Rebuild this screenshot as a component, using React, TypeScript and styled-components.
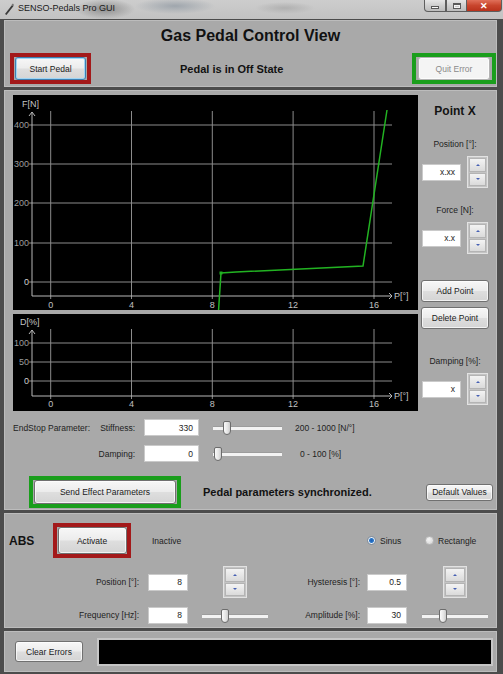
import React from "react";
import styled, { createGlobalStyle } from "styled-components";

const UI_FONT = `"Liberation Sans", Arial, sans-serif`;

const GlobalStyle = createGlobalStyle`
  html, body {
    margin: 0;
    padding: 0;
    background: #4b4b4b;
  }
  body {
    font-family: ${UI_FONT};
    width: 503px;
    height: 674px;
    overflow: hidden;
  }
  * {
    box-sizing: border-box;
  }
`;

const Window = styled.div`
  width: 503px;
  height: 674px;
  display: flex;
  flex-direction: column;
  background: #4c4c4c;
`;

const TitleBar = styled.div`
  height: 19px;
  flex: none;
  display: flex;
  align-items: flex-start;
  background:
    radial-gradient(ellipse 30px 10px at 105px 9px, #8e8e8e, rgba(142, 142, 142, 0)),
    radial-gradient(ellipse 40px 8px at 175px 6px, #9fa6ad, rgba(159, 166, 173, 0)),
    radial-gradient(ellipse 30px 6px at 285px 8px, #b0b0b0, rgba(176, 176, 176, 0)),
    linear-gradient(180deg, #cdcdcd 0%, #c2c2c2 100%);
`;

const AppIcon = styled.svg`
  margin: 3px 0 0 4px;
  flex: none;
`;

const TitleText = styled.div`
  margin-left: 4px;
  font-size: 9px;
  line-height: 16px;
  color: #1a1a1a;
`;

const WindowControls = styled.div`
  margin-left: auto;
  margin-right: 1px;
  display: flex;
`;

const CtrlButton = styled.div<{ $w: number; $close?: boolean }>`
  width: ${p => p.$w}px;
  height: 12px;
  border: 1px solid #5e5e5e;
  border-top: none;
  border-left-width: ${p => (p.$close ? 0 : 1)}px;
  background: ${p =>
    p.$close
      ? "linear-gradient(180deg, #e0705a 0%, #c8452d 50%, #b9321c 100%)"
      : "linear-gradient(180deg, #e6e6e6 0%, #cfcfcf 50%, #bdbdbd 100%)"};
  border-radius: ${p => (p.$close ? "0 0 4px 0" : "0")};
  display: flex;
  align-items: center;
  justify-content: center;
  color: #fff;
  font-size: 9px;
  font-weight: bold;
  &:first-child {
    border-radius: 0 0 0 4px;
  }
`;

const MinGlyph = styled.span`
  width: 8px;
  height: 3px;
  margin-top: 3px;
  background: #fafafa;
  border: 1px solid #5a5a5a;
`;

const MaxGlyph = styled.span`
  width: 8px;
  height: 6px;
  border: 1px solid #5a5a5a;
  border-top-width: 2px;
  background: transparent;
  box-shadow: inset 0 0 0 1px #f4f4f4;
`;

const Body = styled.div`
  flex: 1;
  display: flex;
  flex-direction: column;
  gap: 3px;
  padding: 1px 6px 2px 4px;
`;

const Panel = styled.div<{ $h: number }>`
  height: ${p => p.$h}px;
  flex: none;
  background: #a9a9a9;
  border: 1px solid #bcbcbc;
  display: flex;
  flex-direction: column;
`;

const ViewTitle = styled.div`
  margin-top: 5px;
  font-size: 16px;
  font-weight: bold;
  line-height: 20px;
  text-align: center;
  color: #111;
`;

const HeaderRow = styled.div`
  margin-top: 7px;
  padding-left: 5px;
  display: flex;
  align-items: center;
`;

const StatusText = styled.div<{ $ml: number }>`
  margin-left: ${p => p.$ml}px;
  font-size: 11px;
  font-weight: bold;
  color: #121212;
`;

const Highlight = styled.div<{ $color: string; $w: number; $h: number; $push?: boolean }>`
  width: ${p => p.$w}px;
  height: ${p => p.$h}px;
  margin-left: ${p => (p.$push ? "auto" : "0")};
  border: 4px solid ${p => p.$color};
  display: flex;
  align-items: center;
  justify-content: center;
  flex: none;
`;

const Button = styled.div<{ $w: number; $h: number; $focus?: boolean; $disabled?: boolean }>`
  width: ${p => p.$w}px;
  height: ${p => p.$h}px;
  flex: none;
  display: flex;
  align-items: center;
  justify-content: center;
  font-size: 8.5px;
  color: ${p => (p.$disabled ? "#8a8a8a" : "#1b1b1b")};
  border: 1px solid ${p => (p.$disabled ? "#b3b3b3" : p.$focus ? "#3c7fb1" : "#707070")};
  border-radius: 3px;
  background: ${p =>
    p.$disabled
      ? "#f4f4f4"
      : "linear-gradient(180deg, #f7f7f7 0%, #ececec 48%, #dedede 52%, #d4d4d4 100%)"};
  box-shadow: ${p =>
    p.$focus ? "inset 0 0 0 1px #9fd5f5" : "inset 0 0 0 1px rgba(255, 255, 255, 0.7)"};
`;

const MainPanel = styled(Panel)`
  padding: 4px 0 0 8px;
`;

const TopArea = styled.div`
  display: flex;
  gap: 2px;
`;

const ChartsCol = styled.div`
  display: flex;
  flex-direction: column;
  gap: 4px;
  width: 405px;
`;

const ChartBox = styled.div<{ $h: number }>`
  width: 405px;
  height: ${p => p.$h}px;
  background: #000;
  overflow: hidden;
`;

const RightCol = styled.div`
  width: 70px;
  display: flex;
  flex-direction: column;
  align-items: center;
`;

const PointTitle = styled.div`
  margin-top: 9px;
  font-size: 12px;
  font-weight: bold;
  line-height: 14px;
  color: #141414;
`;

const FieldLabel = styled.div<{ $mt: number }>`
  margin-top: ${p => p.$mt}px;
  font-size: 8.5px;
  line-height: 12px;
  color: #1e1e1e;
`;

const SpinRow = styled.div`
  margin-top: 6px;
  display: flex;
  align-items: center;
  gap: 6px;
`;

const Field = styled.div<{ $w: number }>`
  width: ${p => p.$w}px;
  height: 17px;
  flex: none;
  background: #fff;
  border: 1px solid #cacaca;
  font-size: 8.5px;
  color: #1d1d1d;
  display: flex;
  align-items: center;
  justify-content: flex-end;
  padding-right: 5px;
`;

const SpinBox = styled.div<{ $w: number }>`
  width: ${p => p.$w}px;
  height: 32px;
  flex: none;
  display: flex;
  flex-direction: column;
  gap: 1px;
  padding: 1px;
  background: #c4c4c4;
  border: 1px solid #e2e2e2;
`;

const SpinButton = styled.div`
  flex: 1;
  display: flex;
  align-items: center;
  justify-content: center;
  border: 1px solid #b4b4b4;
  background: linear-gradient(180deg, #f3f3f3 0%, #dadada 100%);
`;

const Arrow = styled.span<{ $down?: boolean }>`
  width: 0;
  height: 0;
  border-left: 2px solid transparent;
  border-right: 2px solid transparent;
  border-${p => (p.$down ? "top" : "bottom")}: 2px solid #4660b4;
`;

const SideButton = styled(Button)<{ $mt: number }>`
  margin-top: ${p => p.$mt}px;
`;

const ParamRows = styled.div`
  margin-top: 8px;
  display: flex;
  flex-direction: column;
`;

const ParamRow = styled.div<{ $mt?: number; $h: number }>`
  margin-top: ${p => p.$mt || 0}px;
  height: ${p => p.$h}px;
  display: flex;
  align-items: center;
`;

const LabelCell = styled.div<{ $w: number; $split?: boolean }>`
  width: ${p => p.$w}px;
  flex: none;
  display: flex;
  justify-content: ${p => (p.$split ? "space-between" : "flex-end")};
  font-size: 8.5px;
  color: #1e1e1e;
`;

const Gap = styled.div<{ $w: number }>`
  width: ${p => p.$w}px;
  flex: none;
`;

const RangeText = styled.div<{ $ml: number }>`
  margin-left: ${p => p.$ml}px;
  font-size: 8.5px;
  color: #1e1e1e;
`;

const SliderTrack = styled.div<{ $w: number }>`
  position: relative;
  width: ${p => p.$w}px;
  height: 15px;
  flex: none;
  &::before {
    content: "";
    position: absolute;
    left: 0;
    right: 0;
    top: 6px;
    height: 3px;
    background: #f3f3f3;
    border-top: 1px solid #9c9c9c;
  }
`;

const SliderHandle = styled.div`
  position: absolute;
  top: 1px;
  width: 8px;
  height: 14px;
  border: 1px solid #6c6c6c;
  border-radius: 2px 2px 4px 4px;
  background: linear-gradient(90deg, #fafafa 0%, #e4e4e4 60%, #cdcdcd 100%);
`;

const ActionRow = styled.div`
  margin-top: 14px;
  height: 32px;
  display: flex;
  align-items: center;
`;

const DefaultButton = styled(Button)`
  margin-left: auto;
  margin-right: 3px;
`;

const AbsRow = styled.div<{ $mt: number; $h: number }>`
  margin-top: ${p => p.$mt}px;
  height: ${p => p.$h}px;
  display: flex;
  align-items: center;
`;

const AbsTitle = styled.div`
  width: 48px;
  flex: none;
  padding-left: 4px;
  font-size: 12px;
  font-weight: bold;
  color: #121212;
`;

const PlainText = styled.div<{ $w?: number; $ml?: number }>`
  ${p => (p.$w ? `width: ${p.$w}px;` : "")}
  margin-left: ${p => p.$ml || 0}px;
  flex: none;
  font-size: 8.5px;
  color: #1e1e1e;
`;

const RadioItem = styled.div<{ $w: number }>`
  width: ${p => p.$w}px;
  display: flex;
  align-items: center;
  gap: 4px;
  font-size: 8.5px;
  color: #1e1e1e;
`;

const RadioDot = styled.span<{ $on?: boolean }>`
  width: 9px;
  height: 9px;
  border-radius: 50%;
  border: 1px solid ${p => (p.$on ? "#7d8a99" : "#b9b9b9")};
  background: ${p =>
    p.$on
      ? "radial-gradient(circle, #1d5fb4 0, #2b77c9 2px, #eef2f6 3px)"
      : "radial-gradient(circle at 40% 35%, #f4f4f4 0, #d2d2d2 100%)"};
`;

const BottomPanel = styled(Panel)`
  flex-direction: row;
  align-items: center;
  padding-left: 10px;
`;

const ErrorDisplay = styled.div`
  margin-left: 14px;
  width: 396px;
  height: 28px;
  background: #000;
  border: 2px solid #c6c6c6;
`;

type Tick = { label: string; y: number };

type ChartProps = {
  height: number;
  yLabel: string;
  yLabelX: number;
  yTicks: Tick[];
  topY: number;
  axisY: number;
  xLabelY: number;
  children?: React.ReactNode;
};

const X_TICKS = [
  { label: "0", x: 37.7 },
  { label: "4", x: 118.5 },
  { label: "8", x: 199.3 },
  { label: "12", x: 280.1 },
  { label: "16", x: 361 },
];

const AXIS_X = 19;
const GRID_RIGHT = 379;

const Chart: React.FC<ChartProps> = ({ height, yLabel, yLabelX, yTicks, topY, axisY, xLabelY, children }) => {
  return (
    <ChartBox $h={height}>
      <svg width="405" height={height} fontFamily={UI_FONT} fontSize="9">
        {X_TICKS.map(t => (
          <line key={"v" + t.label} x1={t.x} y1={topY - 1} x2={t.x} y2={axisY + 3} stroke="#8c8c8c" strokeWidth="1" />
        ))}
        {yTicks.map(t => (
          <line key={"h" + t.label} x1={AXIS_X - 3} y1={t.y} x2={GRID_RIGHT} y2={t.y} stroke="#8c8c8c" strokeWidth="1" />
        ))}
        <line x1={AXIS_X} y1={topY} x2={AXIS_X} y2={axisY} stroke="#b8b8b8" strokeWidth="1" />
        <line x1={AXIS_X} y1={axisY} x2={GRID_RIGHT} y2={axisY} stroke="#b8b8b8" strokeWidth="1" />
        <polyline points={`${AXIS_X - 3},${topY + 4} ${AXIS_X},${topY} ${AXIS_X + 3},${topY + 4}`} fill="none" stroke="#b8b8b8" strokeWidth="1" />
        <polyline points={`${GRID_RIGHT - 3},${axisY - 3} ${GRID_RIGHT},${axisY} ${GRID_RIGHT - 3},${axisY + 3}`} fill="none" stroke="#b8b8b8" strokeWidth="1" />
        <text x={GRID_RIGHT + 2} y={axisY + 3} fill="#c4c4c4">P[°]</text>
        <text x={yLabelX} y={topY - 5} fill="#c4c4c4">{yLabel}</text>
        {yTicks.map(t => (
          <text key={"yl" + t.label} x={AXIS_X - 3} y={t.y + 3} textAnchor="end" fill={t.label === "0" ? "#d0d0d0" : "#9c9c9c"}>
            {t.label}
          </text>
        ))}
        {X_TICKS.map(t => (
          <text key={"xl" + t.label} x={t.x} y={xLabelY} textAnchor="middle" fill="#c0c0c0">
            {t.label}
          </text>
        ))}
        {children}
      </svg>
    </ChartBox>
  );
};

const Spinner: React.FC<{ w: number }> = ({ w }) => (
  <SpinBox $w={w}>
    <SpinButton>
      <Arrow />
    </SpinButton>
    <SpinButton>
      <Arrow $down />
    </SpinButton>
  </SpinBox>
);

const Slider: React.FC<{ w: number; pct: number; ml: number }> = ({ w, pct, ml }) => (
  <>
    <Gap $w={ml} />
    <SliderTrack $w={w}>
      <SliderHandle style={{ left: Math.round(pct * (w - 8)) }} />
    </SliderTrack>
  </>
);

// force curve points, chart-relative
const FORCE_CURVE = "205.5,216 208,178 223,177 350,171 374,15";

export default function App() {
  return (
    <Window>
      <GlobalStyle />
      <TitleBar>
        <AppIcon width="10" height="12" viewBox="0 0 10 12">
          <path d="M1 11 L8 2 L9.5 3 L2.5 12 Z" fill="#3a3a3a" />
          <path d="M7.5 1.5 L9 0.5 L10 2 L9.3 3 Z" fill="#777" />
        </AppIcon>
        <TitleText>SENSO-Pedals Pro GUI</TitleText>
        <WindowControls>
          <CtrlButton $w={22}>
            <MinGlyph />
          </CtrlButton>
          <CtrlButton $w={21}>
            <MaxGlyph />
          </CtrlButton>
          <CtrlButton $w={35} $close>
            ✕
          </CtrlButton>
        </WindowControls>
      </TitleBar>

      <Body>
        <Panel $h={67}>
          <ViewTitle>Gas Pedal Control View</ViewTitle>
          <HeaderRow>
            <Highlight $color="#a3191a" $w={81} $h={31}>
              <Button $w={71} $h={23} $focus>Start Pedal</Button>
            </Highlight>
            <StatusText $ml={89}>Pedal is in Off State</StatusText>
            <Highlight $color="#1a9e1c" $w={84} $h={31} $push>
              <Button $w={72} $h={23} $disabled>Quit Error</Button>
            </Highlight>
          </HeaderRow>
        </Panel>

        <MainPanel $h={420}>
          <TopArea>
            <ChartsCol>
              <Chart
                height={215}
                yLabel="F[N]"
                yLabelX={9}
                topY={17}
                axisY={201}
                xLabelY={213}
                yTicks={[
                  { label: "400", y: 30 },
                  { label: "300", y: 69 },
                  { label: "200", y: 108 },
                  { label: "100", y: 148 },
                  { label: "0", y: 187 },
                ]}
              >
                <polyline points={FORCE_CURVE} fill="none" stroke="#22b322" strokeWidth="1.5" />
                <rect x="206.5" y="176.5" width="3" height="3" fill="#22b322" />
              </Chart>
              <Chart
                height={97}
                yLabel="D[%]"
                yLabelX={7}
                topY={16}
                axisY={82}
                xLabelY={93}
                yTicks={[
                  { label: "100", y: 29 },
                  { label: "50", y: 48 },
                  { label: "0", y: 67 },
                ]}
              />
            </ChartsCol>

            <RightCol>
              <PointTitle>Point X</PointTitle>
              <FieldLabel $mt={20}>Position [°]:</FieldLabel>
              <SpinRow>
                <Field $w={39}>x.xx</Field>
                <Spinner w={21} />
              </SpinRow>
              <FieldLabel $mt={16}>Force [N]:</FieldLabel>
              <SpinRow>
                <Field $w={39}>x.x</Field>
                <Spinner w={21} />
              </SpinRow>
              <SideButton $w={68} $h={22} $mt={26}>Add Point</SideButton>
              <SideButton $w={68} $h={22} $mt={5}>Delete Point</SideButton>
              <FieldLabel $mt={26}>Damping [%]:</FieldLabel>
              <SpinRow>
                <Field $w={39}>x</Field>
                <Spinner w={21} />
              </SpinRow>
            </RightCol>
          </TopArea>

          <ParamRows>
            <ParamRow $h={17}>
              <LabelCell $w={122} $split>
                <span>EndStop Parameter:</span>
                <span>Stiffness:</span>
              </LabelCell>
              <Gap $w={9} />
              <Field $w={55}>330</Field>
              <Slider w={69} pct={0.17} ml={14} />
              <RangeText $ml={13}>200 - 1000 [N/°]</RangeText>
            </ParamRow>
            <ParamRow $h={17} $mt={9}>
              <LabelCell $w={122}>Damping:</LabelCell>
              <Gap $w={9} />
              <Field $w={55}>0</Field>
              <Slider w={69} pct={0.02} ml={14} />
              <RangeText $ml={18}>0 - 100 [%]</RangeText>
            </ParamRow>
          </ParamRows>

          <ActionRow>
            <Gap $w={16} />
            <Highlight $color="#1a9e1c" $w={152} $h={32}>
              <Button $w={142} $h={24}>Send Effect Parameters</Button>
            </Highlight>
            <StatusText $ml={22}>Pedal parameters synchronized.</StatusText>
            <DefaultButton $w={67} $h={17}>Default Values</DefaultButton>
          </ActionRow>
        </MainPanel>

        <Panel $h={115}>
          <AbsRow $mt={9} $h={35}>
            <AbsTitle>ABS</AbsTitle>
            <Highlight $color="#a3191a" $w={78} $h={35}>
              <Button $w={69} $h={27}>Activate</Button>
            </Highlight>
            <PlainText $w={215} $ml={21}>Inactive</PlainText>
            <RadioItem $w={58}>
              <RadioDot $on />
              Sinus
            </RadioItem>
            <RadioItem $w={60}>
              <RadioDot />
              Rectangle
            </RadioItem>
          </AbsRow>

          <AbsRow $mt={8} $h={32}>
            <LabelCell $w={134}>Position [°]:</LabelCell>
            <Gap $w={9} />
            <Field $w={40}>8</Field>
            <Gap $w={35} />
            <Spinner w={24} />
            <LabelCell $w={113}>Hysteresis [°]:</LabelCell>
            <Gap $w={7} />
            <Field $w={40}>0.5</Field>
            <Gap $w={36} />
            <Spinner w={24} />
          </AbsRow>

          <AbsRow $mt={8} $h={18}>
            <LabelCell $w={134}>Frequency [Hz]:</LabelCell>
            <Gap $w={9} />
            <Field $w={40}>8</Field>
            <Slider w={66} pct={0.33} ml={14} />
            <LabelCell $w={92}>Amplitude [%]:</LabelCell>
            <Gap $w={7} />
            <Field $w={40}>30</Field>
            <Slider w={66} pct={0.29} ml={15} />
          </AbsRow>
        </Panel>

        <BottomPanel $h={41}>
          <Button $w={68} $h={21}>Clear Errors</Button>
          <ErrorDisplay />
        </BottomPanel>
      </Body>
    </Window>
  );
}
